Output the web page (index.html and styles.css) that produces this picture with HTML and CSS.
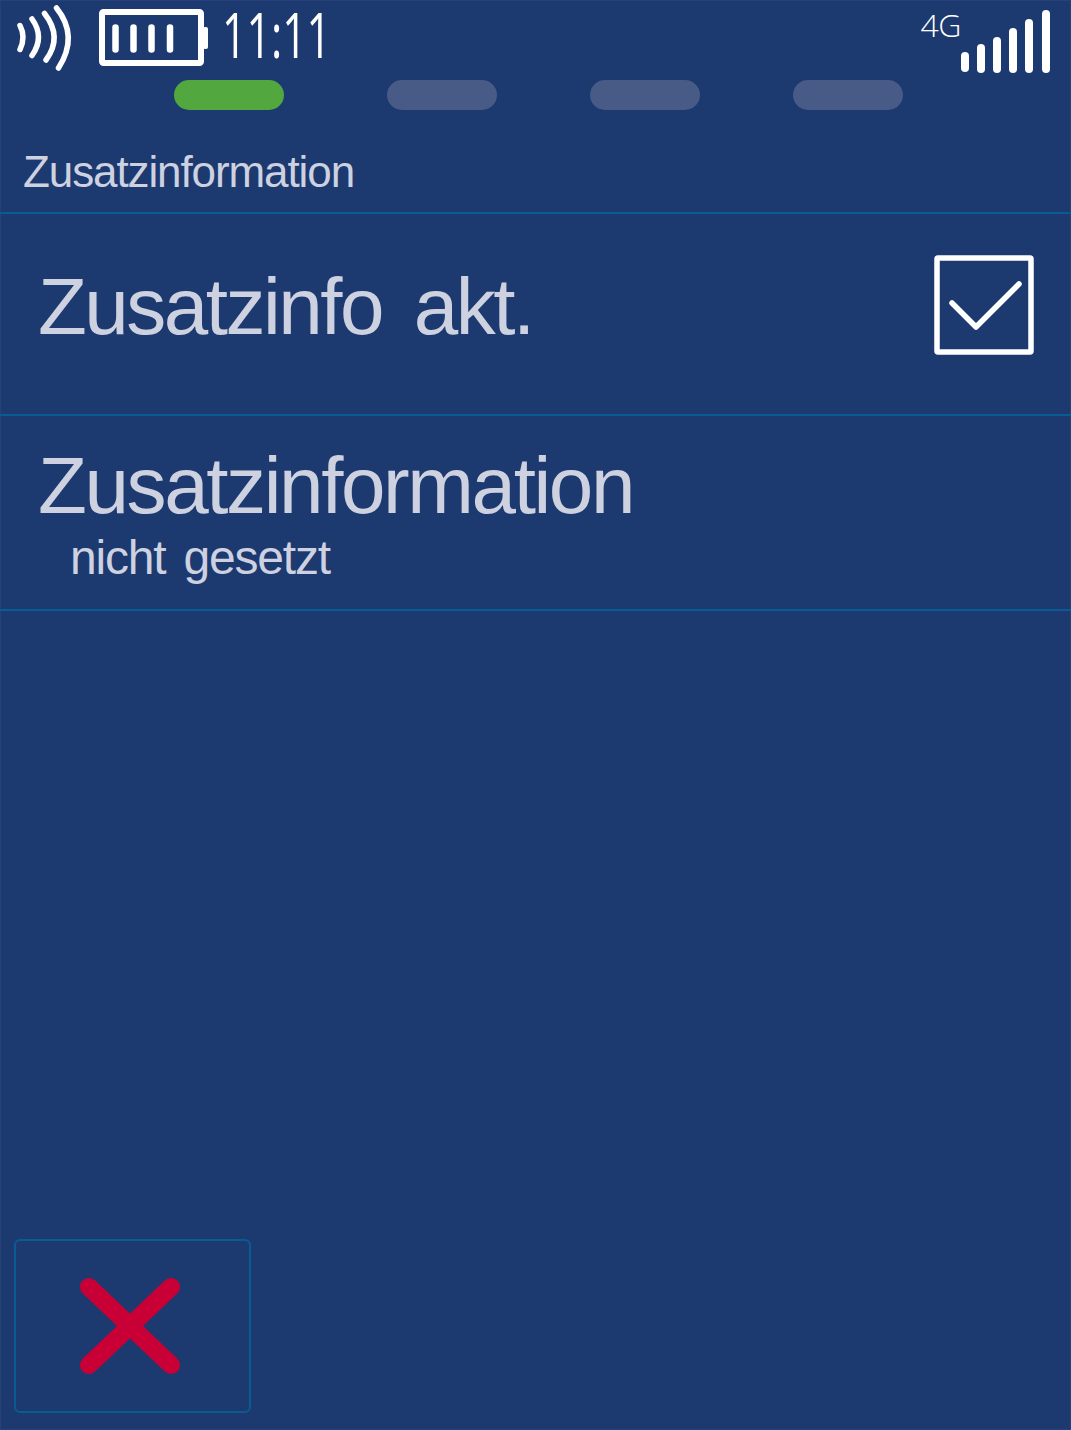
FILE: index.html
```html
<!DOCTYPE html>
<html lang="de">
<head>
    <meta charset="UTF-8">
    <meta name="viewport" content="width=device-width, initial-scale=1.0">
    <title>Zusatzinformation</title>
    <link rel="stylesheet" href="styles.css">
</head>
<body>
    <div class="screen">
        <div class="status">
            <svg class="status-left" width="208" height="80" viewBox="0 0 208 80" fill="none" stroke="#fff" stroke-linecap="round">
                <g stroke-width="5.5">
                    <path d="M20 25.500Q26 37 20 49.500"/>
                    <path d="M32 19Q45 37 32 55.500"/>
                    <path d="M44.500 13.500Q63 37 46 60"/>
                    <path d="M56.500 8Q79 36 58.500 68"/>
                </g>
                <rect x="102" y="12" width="99" height="51" rx="1.500" stroke-width="6"/>
                <rect x="203" y="27" width="5" height="22" rx="2" fill="#fff" stroke="none"/>
                <g stroke-width="6.500">
                    <path d="M115.500 27.500V49.500"/>
                    <path d="M133.500 27.500V49.500"/>
                    <path d="M151.500 27.500V49.500"/>
                    <path d="M170 27.500V49.500"/>
                </g>
            </svg>
            <span class="time">11:11</span>
            <span class="network">4G</span>
            <svg class="signal" width="90" height="80" viewBox="0 0 90 80" fill="#fff">
                <rect x="1" y="52" width="8" height="20" rx="4"/>
                <rect x="17" y="44" width="8" height="29" rx="4"/>
                <rect x="33" y="37" width="8" height="36" rx="4"/>
                <rect x="49" y="28" width="8" height="45" rx="4"/>
                <rect x="65" y="19" width="8" height="54" rx="4"/>
                <rect x="82" y="10" width="8" height="63" rx="4"/>
            </svg>
        </div>

        <div class="steps">
            <div class="step active"></div>
            <div class="step"></div>
            <div class="step"></div>
            <div class="step"></div>
        </div>

        <div class="title">Zusatzinformation</div>

        <div class="row row-check">
            <span class="row-label">Zusatzinfo akt.</span>
            <svg class="check" width="100" height="100" viewBox="0 0 100 100" fill="none" stroke="#fff" stroke-linecap="round" stroke-linejoin="round">
                <rect x="3" y="3" width="94" height="94" rx="1" stroke-width="5.500"/>
                <path d="M18 48L42 72L85 29" stroke-width="5.500"/>
            </svg>
        </div>

        <div class="row row-info">
            <div class="row-label">Zusatzinformation</div>
            <div class="row-sub">nicht gesetzt</div>
        </div>

        <div class="footer">
            <div class="cancel">
                <svg width="100" height="96" viewBox="0 0 100 96" fill="none" stroke="#c90035" stroke-width="18" stroke-linecap="round">
                    <path d="M9 9L91 87"/>
                    <path d="M91 9L9 87"/>
                </svg>
            </div>
        </div>
    </div>
</body>
</html>
```
FILE: styles.css
```css
* {
    box-sizing: border-box;
}

body {
    margin: 0;
    background: #1c3a70;
    font-family: "Liberation Sans", Arial, sans-serif;
    color: #cdd1e0;
}

.screen {
    height: 1430px;
    display: flex;
    flex-direction: column;
    box-shadow: inset 0 0 0 1px #27407a;
}

.status {
    height: 80px;
    display: flex;
    align-items: flex-start;
    padding-right: 21px;
}

.status-left {
    flex: none;
}

.time {
    font-family: "Open Sans", sans-serif;
    font-weight: 500;
    font-size: 62px;
    line-height: 68px;
    color: #fff;
    margin-left: 14px;
    transform: scaleX(0.69);
    transform-origin: left center;
}

.network {
    font-family: "Open Sans", sans-serif;
    font-weight: 350;
    font-size: 32px;
    line-height: 49px;
    letter-spacing: -0.5px;
    color: #fff;
    margin-left: auto;
    margin-right: -1px;
}

.steps {
    display: flex;
    gap: 93px;
    padding-left: 174px;
}

.step {
    width: 110px;
    height: 30px;
    border-radius: 15px;
    background: #475b86;
}

.step.active {
    background: #52a83f;
    margin-right: 10px;
}

.title {
    height: 104px;
    padding: 37px 0 0 23px;
    font-size: 44px;
    line-height: 50px;
    letter-spacing: -1.1px;
    border-bottom: 2px solid #0a5a94;
}

.row {
    border-bottom: 2px solid #0a5a94;
    padding-left: 38px;
}

.row-check {
    height: 202px;
    display: flex;
    align-items: center;
    justify-content: space-between;
    padding-right: 37px;
    padding-bottom: 18px;
}

.row-check .row-label {
    margin-top: 4px;
    letter-spacing: -2.5px;
}

.row-info {
    height: 195px;
    padding-top: 25px;
}

.row-label {
    font-size: 80px;
    line-height: 90px;
    letter-spacing: -2.4px;
    word-spacing: 12px;
}

.row-sub {
    font-size: 48px;
    line-height: 52px;
    letter-spacing: -1.2px;
    word-spacing: 6px;
    padding-left: 32px;
    margin-top: 1px;
}

.footer {
    margin-top: auto;
    padding: 0 0 17px 14px;
}

.cancel {
    width: 237px;
    height: 174px;
    border: 2px solid #0a5a94;
    border-radius: 6px;
    display: flex;
    align-items: center;
    justify-content: center;
    padding-right: 6px;
}
```
